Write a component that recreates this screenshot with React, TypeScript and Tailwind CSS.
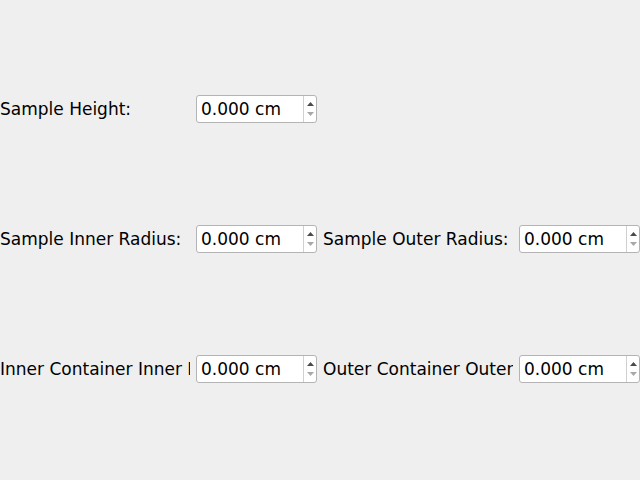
const SpinBox = ({ value }: { value: string }) => (
  <div className="flex h-[28px] w-[121px] items-stretch rounded-[3px] border border-[#b4b4b4] bg-white">
    <div className="flex flex-1 items-center pl-[4px] pt-[1px] text-[17px] leading-none text-black">
      {value}
    </div>
    <div className="flex w-[13px] flex-col items-center justify-center gap-[6px] border-l border-[#d0d0d0]">
      <svg width="7" height="4" viewBox="0 0 7 4">
        <path d="M3.5 0 L7 4 L0 4 Z" fill="#4a4a4a" />
      </svg>
      <svg width="7" height="4" viewBox="0 0 7 4">
        <path d="M0 0 L7 0 L3.5 4 Z" fill="#a8a8a8" />
      </svg>
    </div>
  </div>
);

const Label = ({ text }: { text: string }) => (
  <div className="flex h-[28px] items-center overflow-hidden whitespace-nowrap pt-[1px] text-[17px] leading-none text-black">
    {text}
  </div>
);

export default function App() {
  return (
    <div
      className="h-[480px] w-[640px] bg-[#efefef] pt-[95px]"
      style={{ fontFamily: '"DejaVu Sans", sans-serif' }}
    >
      <div className="grid grid-cols-[190px_121px_190px_121px] gap-x-[6px] gap-y-[102px]">
        <Label text="Sample Height:" />
        <SpinBox value="0.000 cm" />
        <div />
        <div />

        <Label text="Sample Inner Radius:" />
        <SpinBox value="0.000 cm" />
        <Label text="Sample Outer Radius:" />
        <SpinBox value="0.000 cm" />

        <Label text="Inner Container Inner Radius:" />
        <SpinBox value="0.000 cm" />
        <Label text="Outer Container Outer Radius:" />
        <SpinBox value="0.000 cm" />
      </div>
    </div>
  );
}
